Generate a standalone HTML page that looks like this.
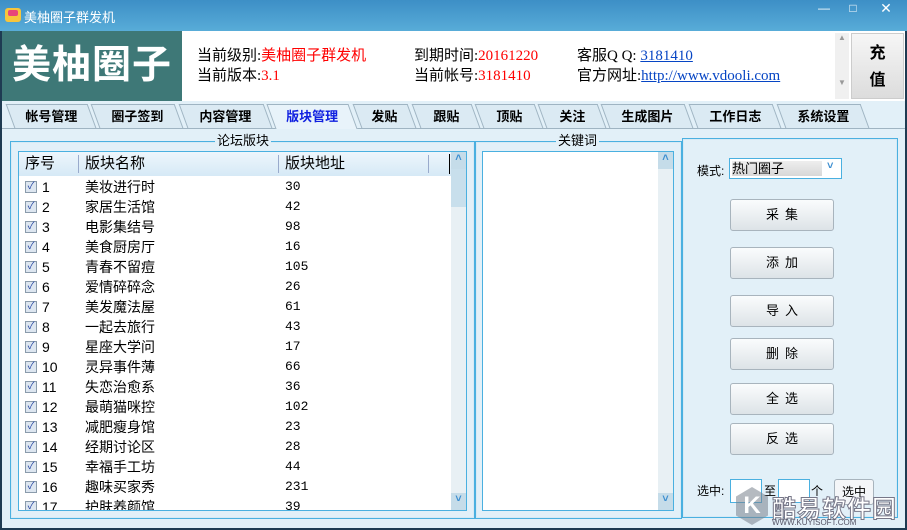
<!DOCTYPE html>
<html><head><meta charset="utf-8"><style>
*{margin:0;padding:0;box-sizing:border-box}
body{width:907px;height:530px;overflow:hidden;background:#1e3b52;font-family:"Liberation Sans","Noto Sans CJK SC","WenQuanYi Zen Hei",sans-serif;position:relative}
.a{position:absolute}
.title{left:0;top:0;width:907px;height:31px;background:linear-gradient(#3d8fc6,#58acd8);color:#fff;font-size:13px}
.banner{left:2px;top:31px;width:903px;height:70px;background:#fff}
.logo{left:2px;top:31px;width:180px;height:70px;background:#3e7877;color:#fff;font-size:39px;font-weight:bold;text-align:center;line-height:70px;letter-spacing:1px}
.info{font-size:15px;color:#000;line-height:20px;font-family:"Liberation Serif","Noto Sans CJK SC",serif}
.r{color:#f00}
.ln{color:#0645c4;text-decoration:underline}
.main{left:2px;top:101px;width:903px;height:427px;background:#e2f0f8}
.tab{top:104px;height:24px;font-size:13px;font-weight:bold;text-align:center;line-height:24px;background:#dbeaf3;border:1px solid #9fb4c2;border-bottom:none;transform:skewX(20deg)}
.tab span{display:inline-block;transform:skewX(-20deg)}
.grp{border:1px solid #4ab0e0;box-shadow:inset 0 0 0 1px #d6eaf5}
.gl{background:#e2f0f8;font-size:13px;padding:0 2px;top:-9px;line-height:16px}
.list{background:#fff;border:1px solid #4ab0e0}
.row{position:absolute;left:4px;height:20px;font-size:14px;line-height:20px;width:420px}
.cb{position:absolute;left:2px;top:4px;width:12px;height:12px;border:1px solid #8a9bab;background:#dde6f0;font-size:10px;line-height:10px;color:#2040a0;text-align:center}
.btn{left:730px;width:104px;height:32px;border:1px solid #a8b4bd;border-radius:3px;background:linear-gradient(#fafcfd,#dde3e7);font-size:13px;text-align:center;line-height:30px;letter-spacing:6px;text-indent:6px}
.sb{background:#e8f0f4;width:15px}
.arr{color:#3c8ed0;font-size:11px;font-weight:bold;text-align:center;width:15px;height:17px;background:#c5dce9}
</style></head><body>
<div class="a title">
 <div class="a" style="left:5px;top:8px;width:16px;height:14px;background:#f7c53c;border-radius:3px"><div class="a" style="left:3px;top:2px;width:10px;height:6px;background:#e8457a;border-radius:2px"></div></div>
 <div class="a" style="left:24px;top:7px;font-size:13px">美柚圈子群发机</div>
 <div class="a" style="left:811px;top:1px;width:26px;height:18px;text-align:center;font-size:12px">—</div>
 <div class="a" style="left:839px;top:1px;width:28px;height:18px;text-align:center;font-size:12px">□</div>
 <div class="a" style="left:868px;top:0px;width:36px;height:20px;text-align:center;font-size:14px">✕</div>
</div>
<div class="a banner"></div>
<div class="a logo">美柚圈子</div>
<div class="a info" style="left:197px;top:46px">当前级别:<span class="r">美柚圈子群发机</span><br>当前版本:<span class="r">3.1</span></div>
<div class="a info" style="left:414px;top:46px">到期时间:<span class="r">20161220</span><br>当前帐号:<span class="r">3181410</span></div>
<div class="a info" style="left:577px;top:46px">客服Q Q: <span class="ln">3181410</span><br>官方网址:<span class="ln">http://www.vdooli.com</span></div>
<div class="a" style="left:835px;top:33px;width:14px;height:66px;background:#f0f0f0;color:#999;font-size:8px;text-align:center">▲<br><br><br><br><br>▼</div>
<div class="a" style="left:851px;top:33px;width:53px;height:66px;background:linear-gradient(#f6f6f6,#dcdcdc);border:1px solid #ccc;font-size:16px;font-weight:bold;text-align:center;line-height:27px;padding-top:6px">充<br>值</div>
<div class="a main"></div>
<div class="a" style="left:2px;top:128px;width:903px;height:1px;background:#9fb4c2"></div>
<div class="a tab" style="left:10px;width:82px"><span>帐号管理</span></div>
<div class="a tab" style="left:95px;width:84px"><span>圈子签到</span></div>
<div class="a tab" style="left:183px;width:85px"><span>内容管理</span></div>
<div class="a tab" style="left:271px;width:82px;background:#e8f3fa;height:25px"><span style="color:#1020e0">版块管理</span></div>
<div class="a tab" style="left:357px;width:55px"><span>发贴</span></div>
<div class="a tab" style="left:416px;width:60px"><span>跟贴</span></div>
<div class="a tab" style="left:479px;width:60px"><span>顶贴</span></div>
<div class="a tab" style="left:542px;width:60px"><span>关注</span></div>
<div class="a tab" style="left:605px;width:84px"><span>生成图片</span></div>
<div class="a tab" style="left:693px;width:84px"><span>工作日志</span></div>
<div class="a tab" style="left:781px;width:84px"><span>系统设置</span></div>

<div class="a grp" style="left:10px;top:141px;width:465px;height:378px"><div class="a gl" style="left:204px">论坛版块</div></div>
<div class="a list" style="left:18px;top:151px;width:449px;height:360px;overflow:hidden">
 <div class="a" style="left:0;top:0;width:432px;height:24px;background:linear-gradient(#eef6fc,#d6e9f6);font-size:15px;line-height:24px">
  <span class="a" style="left:6px">序号</span><span class="a" style="left:59px;top:3px;width:1px;height:18px;background:#9ac"></span>
  <span class="a" style="left:66px">版块名称</span><span class="a" style="left:259px;top:3px;width:1px;height:18px;background:#9ac"></span>
  <span class="a" style="left:266px">版块地址</span><span class="a" style="left:409px;top:3px;width:1px;height:18px;background:#9ac"></span>
  <span class="a" style="left:430px;top:2px;width:1px;height:20px;background:#000"></span>
 </div>
 <div class="a sb" style="left:432px;top:0;height:358px"><div class="arr">˄</div><div style="height:38px;background:#c8dfec"></div><div class="arr a" style="top:341px">˅</div></div>
 <div id="rows"></div>
</div>
<div class="a grp" style="left:475px;top:141px;width:207px;height:378px"><div class="a gl" style="left:80px">关键词</div></div>
<div class="a list" style="left:482px;top:151px;width:192px;height:360px"><div class="a sb" style="left:175px;top:0;height:358px"><div class="arr">˄</div><div class="arr a" style="top:341px">˅</div></div></div>
<div class="a grp" style="left:682px;top:138px;width:216px;height:380px"></div>
<div class="a" style="left:697px;top:162px;font-size:12px">模式:</div>
<div class="a" style="left:729px;top:158px;width:113px;height:21px;border:1px solid #4ab0e0;background:#fff"><div class="a" style="left:2px;top:2px;width:90px;height:15px;background:linear-gradient(#eee,#d8d8d8);font-size:13px;line-height:15px">热门圈子</div><div class="a" style="left:97px;top:1px;color:#3c8ed0;font-size:11px;font-weight:bold">˅</div></div>
<div class="a btn" style="top:199px">采集</div>
<div class="a btn" style="top:247px">添加</div>
<div class="a btn" style="top:295px">导入</div>
<div class="a btn" style="top:338px">删除</div>
<div class="a btn" style="top:383px">全选</div>
<div class="a btn" style="top:423px">反选</div>
<div class="a" style="left:697px;top:482px;font-size:12px">选中:</div>
<div class="a" style="left:730px;top:479px;width:32px;height:24px;border:1px solid #4ab0e0;background:#fff"></div>
<div class="a" style="left:764px;top:482px;font-size:12px">至</div>
<div class="a" style="left:778px;top:479px;width:32px;height:24px;border:1px solid #4ab0e0;background:#fff"></div>
<div class="a" style="left:811px;top:482px;font-size:12px">个</div>
<div class="a" style="left:834px;top:479px;width:40px;height:26px;border:1px solid #a8b4bd;border-radius:3px;background:#f4f6f8;font-size:12px;text-align:center;line-height:24px">选中</div>
<div class="a" style="left:736px;top:487px;width:32px;height:38px;background:rgba(120,130,140,.55);clip-path:polygon(50% 0,100% 25%,100% 75%,50% 100%,0 75%,0 25%);color:#fff;font-size:24px;font-weight:bold;text-align:center;line-height:38px">K</div>
<div class="a" style="left:772px;top:489px;font-size:24px;font-weight:bold;color:#fff;-webkit-text-stroke:1px #778;letter-spacing:1px">酷易软件园</div>
<div class="a" style="left:772px;top:518px;font-size:8px;color:#556">WWW.KUYISOFT.COM</div>
<script>
var d=[["美妆进行时",30],["家居生活馆",42],["电影集结号",98],["美食厨房厅",16],["青春不留痘",105],["爱情碎碎念",26],["美发魔法屋",61],["一起去旅行",43],["星座大学问",17],["灵异事件薄",66],["失恋治愈系",36],["最萌猫咪控",102],["减肥瘦身馆",23],["经期讨论区",28],["幸福手工坊",44],["趣味买家秀",231],["护肤养颜馆",39]];
var h="";d.forEach(function(r,i){h+='<div class="row" style="top:'+(25+i*20)+'px"><div class="cb">✓</div><span class="a" style="left:19px">'+(i+1)+'</span><span class="a" style="left:62px">'+r[0]+'</span><span class="a" style="left:262px;font-family:Liberation Mono,monospace;font-size:13px">'+r[1]+'</span></div>'});
document.getElementById("rows").innerHTML=h;
</script>
</body></html>
